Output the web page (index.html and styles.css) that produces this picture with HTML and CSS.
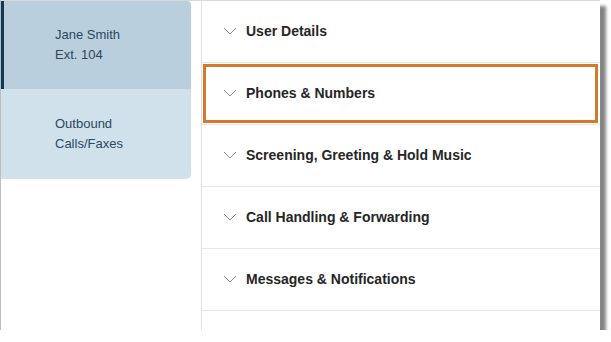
FILE: index.html
```html
<!DOCTYPE html>
<html>
<head>
<meta charset="utf-8">
<link rel="stylesheet" href="styles.css">
</head>
<body>
<div class="frame">
  <nav class="sidebar">
    <div class="side-item active">
      <span>Jane Smith<br>Ext. 104</span>
    </div>
    <div class="side-item">
      <span>Outbound<br>Calls/Faxes</span>
    </div>
  </nav>
  <main class="panel">
    <div class="row"><svg class="chev" viewBox="0 0 14 8"><path d="M1 1 L7 7 L13 1"/></svg><span>User Details</span></div>
    <div class="row highlight"><svg class="chev" viewBox="0 0 14 8"><path d="M1 1 L7 7 L13 1"/></svg><span>Phones &amp; Numbers</span></div>
    <div class="row"><svg class="chev" viewBox="0 0 14 8"><path d="M1 1 L7 7 L13 1"/></svg><span>Screening, Greeting &amp; Hold Music</span></div>
    <div class="row"><svg class="chev" viewBox="0 0 14 8"><path d="M1 1 L7 7 L13 1"/></svg><span>Call Handling &amp; Forwarding</span></div>
    <div class="row"><svg class="chev" viewBox="0 0 14 8"><path d="M1 1 L7 7 L13 1"/></svg><span>Messages &amp; Notifications</span></div>
  </main>
</div>
</body>
</html>
```
FILE: styles.css
```css
* { box-sizing: border-box; }
html, body { margin: 0; padding: 0; background: #ffffff; }
body { font-family: "Liberation Sans", Arial, sans-serif; }

.frame {
  width: 600px;
  height: 330px;
  display: flex;
  align-items: flex-start;
  background: #ffffff;
  border-left: 1px solid #bdbdbd;
  border-top: 1px solid #d9d9d9;
  box-shadow: 6px 6px 3px rgba(50, 50, 50, 0.6);
}

.sidebar {
  width: 190px;
  margin-right: 10px;
  border-radius: 0 4px 5px 0;
  overflow: hidden;
  flex: none;
}

.side-item {
  display: flex;
  align-items: center;
  padding-left: 54px;
  padding-bottom: 1px;
  height: 90px;
  background: #d1e1ec;
  color: #2b4860;
  font-size: 13px;
  line-height: 19.5px;
}

.side-item.active {
  height: 88px;
  background: #b9cfde;
  border-left: 3px solid #113a58;
  padding-left: 51px;
}

.panel {
  flex: 1;
  height: 100%;
  border-left: 1px solid #e2e2e2;
}

.row {
  position: relative;
  height: 62px;
  display: flex;
  align-items: center;
  padding-left: 21px;
  padding-bottom: 2px;
  border-bottom: 1px solid #e6e6e6;
  font-size: 14px;
  font-weight: bold;
  color: #262626;
}

.row .chev {
  width: 14px;
  height: 8px;
  margin-right: 9px;
  fill: none;
  stroke: #8c8c8c;
  stroke-width: 1;
}

.row.highlight::after {
  content: "";
  position: absolute;
  top: 1px;
  bottom: 1px;
  left: 1px;
  right: 2px;
  border: 3px solid #d27a2e;
}
```
